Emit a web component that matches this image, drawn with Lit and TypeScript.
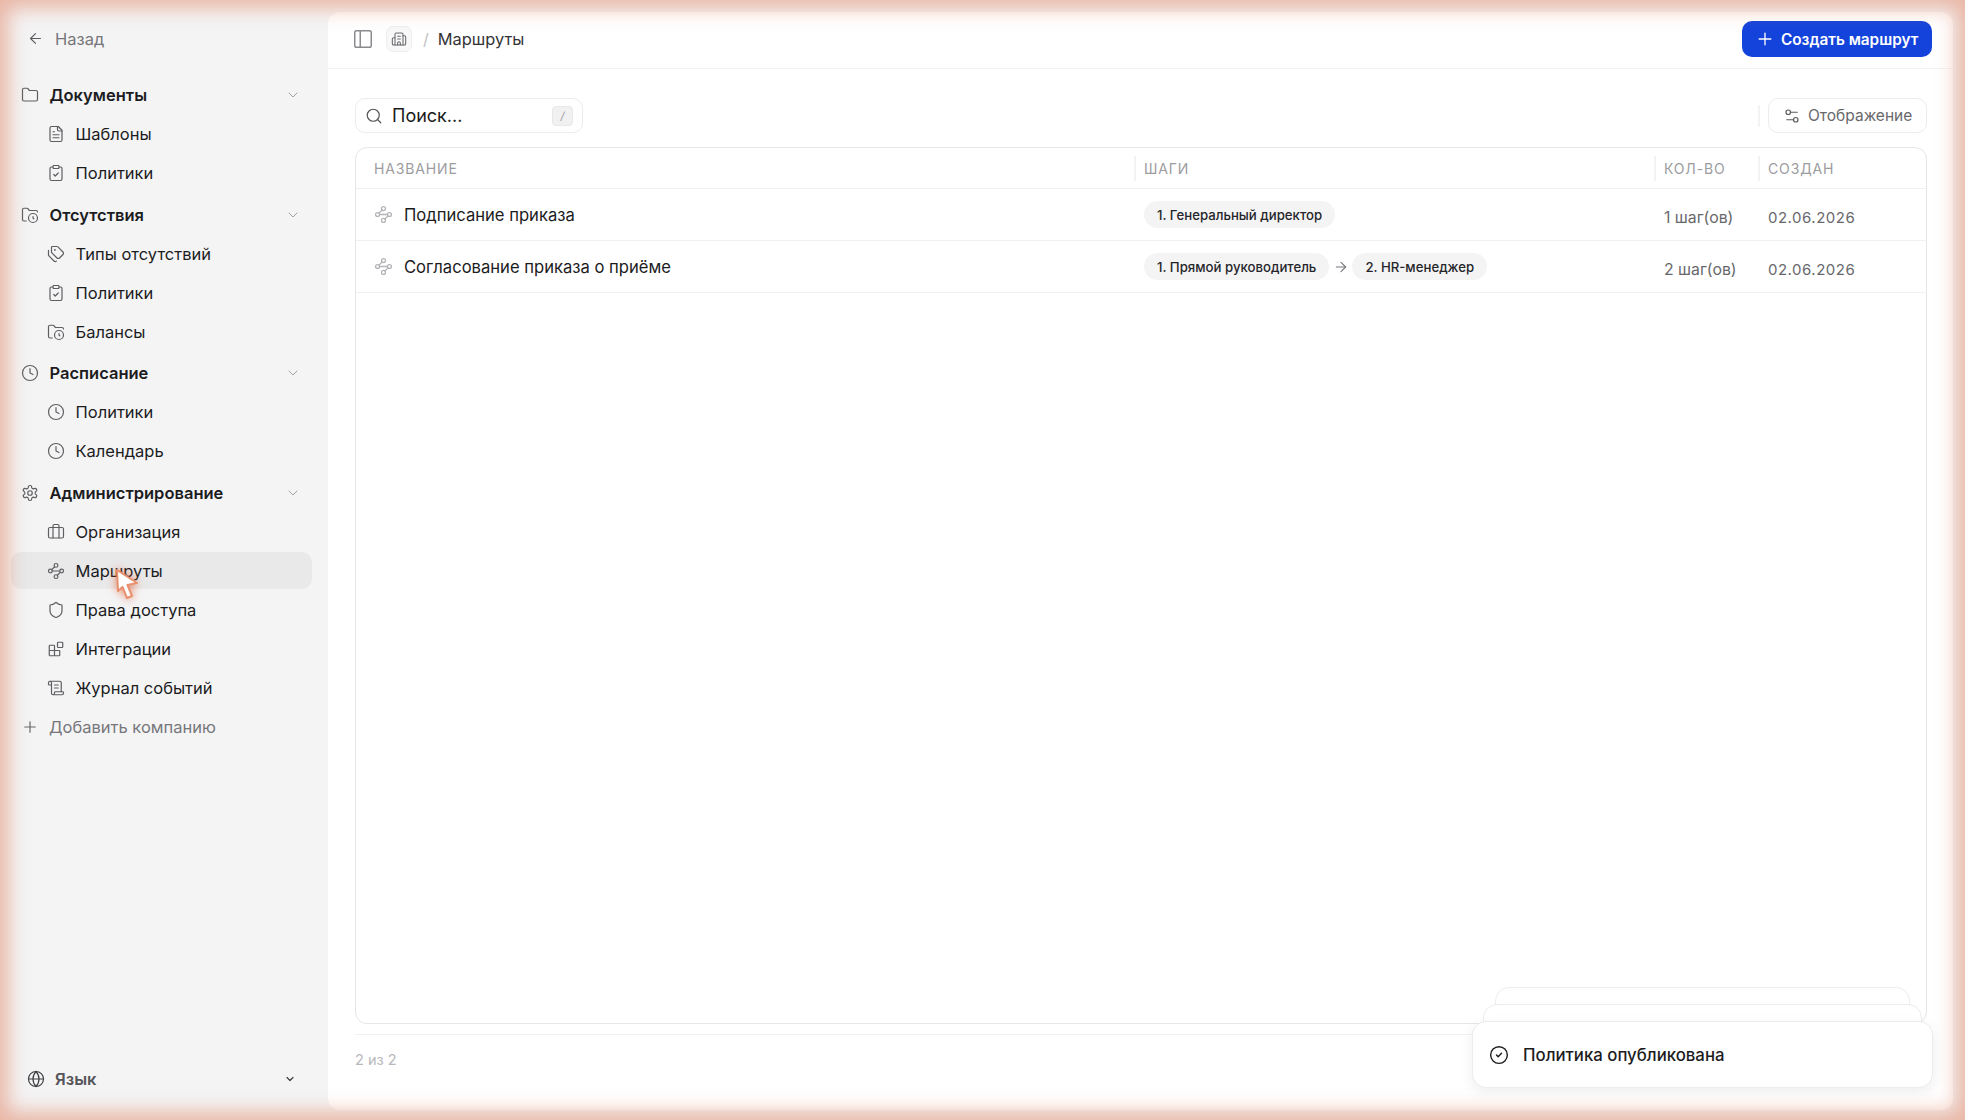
import { LitElement, html, css, svg } from "lit";
import { customElement } from "lit/decorators.js";

const I: Record<string, any> = {
  folder: svg`<path d="M20 20a2 2 0 0 0 2-2V8a2 2 0 0 0-2-2h-7.9a2 2 0 0 1-1.69-.9L9.6 3.9A2 2 0 0 0 7.93 3H4a2 2 0 0 0-2 2v13a2 2 0 0 0 2 2Z"/>`,
  folderClock: svg`<circle cx="16" cy="16" r="6"/><path d="M7 20H4a2 2 0 0 1-2-2V5a2 2 0 0 1 2-2h3.9a2 2 0 0 1 1.69.9l.81 1.2a2 2 0 0 0 1.67.9H20a2 2 0 0 1 2 2"/><path d="M16 14v2l1 1"/>`,
  file: svg`<path d="M15 2H6a2 2 0 0 0-2 2v16a2 2 0 0 0 2 2h12a2 2 0 0 0 2-2V7Z"/><path d="M14 2v4a2 2 0 0 0 2 2h4"/><path d="M10 9H8"/><path d="M16 13H8"/><path d="M16 17H8"/>`,
  clip: svg`<rect x="8" y="2" width="8" height="4" rx="1"/><path d="M16 4h2a2 2 0 0 1 2 2v14a2 2 0 0 1-2 2H6a2 2 0 0 1-2-2V6a2 2 0 0 1 2-2h2"/><path d="m9 14 2 2 4-4"/>`,
  tags: svg`<path d="M13.172 2a2 2 0 0 1 1.414.586l6.71 6.71a2.4 2.4 0 0 1 0 3.408l-4.592 4.592a2.4 2.4 0 0 1-3.408 0l-6.71-6.71A2 2 0 0 1 6 9.172V3a1 1 0 0 1 1-1z"/><path d="M2 7v6.172a2 2 0 0 0 .586 1.414l6.71 6.71a2.4 2.4 0 0 0 3.191.193"/><circle cx="10.5" cy="6.5" r=".5"/>`,
  clock: svg`<circle cx="12" cy="12" r="10"/><polyline points="12 6 12 12 16 14"/>`,
  gear: svg`<path d="M12.22 2h-.44a2 2 0 0 0-2 2v.18a2 2 0 0 1-1 1.73l-.43.25a2 2 0 0 1-2 0l-.15-.08a2 2 0 0 0-2.73.73l-.22.38a2 2 0 0 0 .73 2.73l.15.1a2 2 0 0 1 1 1.72v.51a2 2 0 0 1-1 1.74l-.15.09a2 2 0 0 0-.73 2.73l.22.38a2 2 0 0 0 2.73.73l.15-.08a2 2 0 0 1 2 0l.43.25a2 2 0 0 1 1 1.73V20a2 2 0 0 0 2 2h.44a2 2 0 0 0 2-2v-.18a2 2 0 0 1 1-1.73l.43-.25a2 2 0 0 1 2 0l.15.08a2 2 0 0 0 2.73-.73l.22-.39a2 2 0 0 0-.73-2.73l-.15-.08a2 2 0 0 1-1-1.74v-.5a2 2 0 0 1 1-1.74l.15-.09a2 2 0 0 0 .73-2.73l-.22-.38a2 2 0 0 0-2.73-.73l-.15.08a2 2 0 0 1-2 0l-.43-.25a2 2 0 0 1-1-1.73V4a2 2 0 0 0-2-2z"/><circle cx="12" cy="12" r="3"/>`,
  case: svg`<rect x="2" y="6" width="20" height="14" rx="2"/><path d="M16 20V4a2 2 0 0 0-2-2h-4a2 2 0 0 0-2 2v16"/>`,
  way: svg`<circle cx="12" cy="4.5" r="2.5"/><path d="m10.2 6.3-3.9 3.9"/><circle cx="4.5" cy="12" r="2.5"/><path d="M7 12h10"/><circle cx="19.5" cy="12" r="2.5"/><path d="m13.8 17.7 3.9-3.9"/><circle cx="12" cy="19.5" r="2.5"/>`,
  shield: svg`<path d="M20 13c0 5-3.5 7.5-7.66 8.95a1 1 0 0 1-.67-.01C7.5 20.5 4 18 4 13V6a1 1 0 0 1 1-1c2 0 4.5-1.2 6.24-2.72a1.17 1.17 0 0 1 1.52 0C14.51 3.81 17 5 19 5a1 1 0 0 1 1 1z"/>`,
  blocks: svg`<rect x="14" y="3" width="7" height="7" rx="1"/><path d="M10 21V8a1 1 0 0 0-1-1H4a1 1 0 0 0-1 1v12a1 1 0 0 0 1 1h12a1 1 0 0 0 1-1v-5a1 1 0 0 0-1-1H3"/>`,
  scroll: svg`<path d="M15 12h-5"/><path d="M15 8h-5"/><path d="M19 17V5a2 2 0 0 0-2-2H4"/><path d="M8 21h12a2 2 0 0 0 2-2v-1a1 1 0 0 0-1-1H11a1 1 0 0 0-1 1v1a2 2 0 1 1-4 0V5a2 2 0 1 0-4 0v2a1 1 0 0 0 1 1h3"/>`,
  building: svg`<path d="M10 12h4"/><path d="M10 8h4"/><path d="M14 21v-3a2 2 0 0 0-4 0v3"/><path d="M6 10H4a2 2 0 0 0-2 2v7a2 2 0 0 0 2 2h16a2 2 0 0 0 2-2V9a2 2 0 0 0-2-2h-2"/><path d="M6 21V5a2 2 0 0 1 2-2h8a2 2 0 0 1 2 2v16"/>`,
  sliders: svg`<path d="M14 17H5"/><path d="M19 7h-9"/><circle cx="17" cy="17" r="3"/><circle cx="7" cy="7" r="3"/>`,
  check: svg`<circle cx="12" cy="12" r="10"/><path d="m9 12 2 2 4-4"/>`,
  panel: svg`<rect x="3" y="3" width="18" height="18" rx="2"/><path d="M9 3v18"/>`,
  globe: svg`<circle cx="12" cy="12" r="10"/><path d="M12 2a14.5 14.5 0 0 0 0 20 14.5 14.5 0 0 0 0-20"/><path d="M2 12h20"/>`,
  back: svg`<path d="m12 19-7-7 7-7"/><path d="M19 12H5"/>`,
  arrow: svg`<path d="M5 12h14"/><path d="m12 5 7 7-7 7"/>`,
  search: svg`<path d="m21 21-4.34-4.34"/><circle cx="11" cy="11" r="8"/>`,
  plus: svg`<path d="M5 12h14"/><path d="M12 5v14"/>`,
  chev: svg`<path d="m6 9 6 6 6-6"/>`,
};

const icon = (n: string, cls = "") =>
  html`<svg class="ic ${cls}" viewBox="0 0 24 24" fill="none" stroke="currentColor" stroke-linecap="round" stroke-linejoin="round">${I[n]}</svg>`;

const NAV = [
  { icon: "folder", label: "Документы", items: [["file", "Шаблоны"], ["clip", "Политики"]] },
  { icon: "folderClock", label: "Отсутствия", items: [["tags", "Типы отсутствий"], ["clip", "Политики"], ["folderClock", "Балансы"]] },
  { icon: "clock", label: "Расписание", items: [["clock", "Политики"], ["clock", "Календарь"]] },
  { icon: "gear", label: "Администрирование", items: [["case", "Организация"], ["way", "Маршруты"], ["shield", "Права доступа"], ["blocks", "Интеграции"], ["scroll", "Журнал событий"]] },
];

const ROWS = [
  { name: "Подписание приказа", steps: ["1. Генеральный директор"], count: "1 шаг(ов)", date: "02.06.2026" },
  { name: "Согласование приказа о приёме", steps: ["1. Прямой руководитель", "2. HR-менеджер"], count: "2 шаг(ов)", date: "02.06.2026" },
];

@customElement("app-root")
export class AppRoot extends LitElement {
  static styles = css`
    :host {
      display: block;
      position: relative;
      height: 1120px;
      overflow: hidden;
      font-family: Inter, "Liberation Sans", sans-serif;
      color: #1a1a1a;
      background: #f4f4f5;
    }
    * { box-sizing: border-box; }
    .ic { width: 18px; height: 18px; stroke-width: 1.6; flex: none; display: block; }
    .layout { display: flex; height: 100%; }
    .side { width: 328px; flex: none; display: flex; flex-direction: column; padding: 20px 16px 23px 11px; }
    .row { height: 37px; display: flex; align-items: center; font-size: 16.5px; border-radius: 10px; margin-bottom: 2px; }
    .back { padding-left: 16px; color: #76767a; margin-bottom: 19.5px; gap: 11px; }
    .back .ic { width: 17px; height: 17px; color: #5c5c60; }
    .sec { padding: 0 11px 0 10px; font-weight: 600; color: #1c1c1e; gap: 10.5px; }
    .sec .ic { color: #5e5e62; }
    .sec .ic.chev { width: 16px; height: 16px; margin-left: auto; color: #a0a0a4; stroke-width: 1.5; }
    .group { margin-bottom: 2.67px; }
    .item { padding-left: 36px; gap: 10.5px; color: #1c1c1e; font-weight: 400; }
    .item .ic { color: #5e5e62; }
    .item.on { background: #e9e9ea; }
    .add { margin-top: -3px; padding-left: 10px; gap: 10px; color: #77777b; }
    .add .ic { color: #66666a; }
    .lang { margin-top: auto; padding: 0 16px 0 15.5px; gap: 10.5px; color: #55555a; font-weight: 600; margin-bottom: 0; }
    .lang .ic { color: #3f3f43; width: 18px; height: 18px; }
    .lang .ic.chev { width: 12px; height: 12px; stroke-width: 2.4; margin-left: auto; }

    .main { flex: 1; margin: 12px 12px 10px 0; background: #fff; border-radius: 12px; display: flex; flex-direction: column; min-width: 0; }
    .top { height: 57px; flex: none; display: flex; align-items: center; padding: 0 21px 2px 24px; border-bottom: 1px solid #f3f3f4; }
    .top .panel { color: #8a8a8e; width: 22px; height: 22px; }
    .org { width: 26px; height: 26px; margin-left: 12px; border: 1px solid #eeeeef; background: #f8f8f8; border-radius: 7px; display: flex; align-items: center; justify-content: center; color: #6a6a6e; }
    .org .ic { width: 16px; height: 16px; }
    .slash { margin: 0 9px 0 11px; color: #c0c0c2; font-size: 16px; }
    .crumb { font-size: 16.4px; color: #333336; }
    .cta { margin-left: auto; height: 36px; width: 190px; background: #1443dc; color: #fff; border-radius: 10px; display: flex; align-items: center; gap: 6px; padding-left: 13px; font-size: 15.3px; font-weight: 600; }
    .cta .ic { width: 20px; height: 20px; }

    .body { flex: 1; display: flex; flex-direction: column; padding: 29px 26px 0 27px; min-height: 0; }
    .tools { display: flex; align-items: center; height: 35px; flex: none; }
    .search { width: 228px; height: 35px; border: 1.5px solid #ececee; border-radius: 10px; display: flex; align-items: center; padding: 0 9px 0 9px; gap: 9px; font-size: 18px; color: #1a1a1a; }
    .search .ic { color: #55555a; }
    .kbd { margin-left: auto; width: 21px; height: 20px; background: #f1f1f2; border: 1px solid #e8e8ea; border-radius: 4px; font-size: 11px; font-style: italic; color: #9a9a9e; display: flex; align-items: center; justify-content: center; }
    .sep { margin-left: auto; width: 2px; height: 22px; background: #f3f3f4; }
    .view { margin-left: 8px; width: 159px; height: 35px; border: 1.5px solid #ececee; border-radius: 10px; display: flex; align-items: center; padding-left: 14px; gap: 7px; font-size: 15.5px; color: #68686c; }
    .view .ic { color: #5e5e62; }

    .table { flex: 1; margin-top: 14px; border: 1px solid #e6e6e8; border-radius: 12px; min-height: 0; }
    .grid { display: grid; grid-template-columns: 778px 520px 104px 1fr; align-items: center; }
    .head { height: 41px; border-bottom: 1px solid #f0f0f1; }
    .th { position: relative; font-size: 14px; font-weight: 400; letter-spacing: 0.85px; color: #9c9ca0; padding-left: 18px; }
    .th + .th { padding-left: 10px; }
    .th + .th::before { content: ""; position: absolute; left: 0; top: -4px; bottom: -4px; width: 2px; background: #f3f3f4; }
    .tr { height: 52px; border-bottom: 1px solid #f1f1f2; }
    .name { display: flex; align-items: center; gap: 11px; padding-left: 18px; font-size: 16.6px; color: #1c1c1e; }
    .name .ic { color: #b4b4b8; width: 19px; height: 19px; }
    .steps { display: flex; align-items: center; padding-left: 10px; gap: 3.5px; }
    .steps .ic { width: 16px; height: 16px; color: #77777b; }
    .pill { height: 27px; padding: 0 13px; border-radius: 14px; background: #f4f4f5; font-size: 13.2px; font-weight: 500; display: flex; align-items: center; color: #26262a; }
    .cnt, .date { padding-left: 10px; color: #68686c; padding-top: 5px; }
    .cnt { font-size: 15.8px; }
    .date { font-size: 15px; letter-spacing: 0.5px; }
    .foot { flex: none; height: 76px; margin-top: 10px; border-top: 1px solid #f1f1f2; padding-top: 16px; font-size: 14.5px; color: #b8b8bc; }

    .toasts { position: absolute; left: 1472px; top: 987px; width: 461px; height: 101px; }
    .card { position: absolute; background: #fff; border: 1px solid #ececee; border-radius: 14px; }
    .c3 { left: 23px; right: 23px; top: 0; height: 50px; }
    .c2 { left: 11px; right: 11px; top: 17px; height: 50px; }
    .c1 { left: 0; right: 0; top: 34px; height: 67px; box-shadow: 0 4px 14px rgba(0,0,0,.07); display: flex; align-items: center; padding-left: 16px; gap: 14px; font-size: 16.8px; font-weight: 500; color: #1c1c1e; }
    .c1 .ic { width: 20px; height: 20px; color: #1c1c1e; stroke-width: 1.7; }

    .cursor { position: absolute; left: 111px; top: 565px; width: 34px; height: 38px; filter: drop-shadow(0 0 5px rgba(226,90,40,.7)); }
    .glow { position: absolute; inset: 0; pointer-events: none; box-shadow: inset 0 0 20px 8px rgba(225,140,110,.6); }
  `;

  render() {
    return html`
      <div class="layout">
        <aside class="side">
          <div class="row back">${icon("back")}<span>Назад</span></div>
          ${NAV.map(
            (g) => html`<div class="group">
              <div class="row sec">${icon(g.icon)}<span>${g.label}</span>${icon("chev", "chev")}</div>
              ${g.items.map(
                ([ic, t]) => html`<div class="row item ${t === "Маршруты" ? "on" : ""}">${icon(ic)}<span>${t}</span></div>`
              )}
            </div>`
          )}
          <div class="row add">${icon("plus")}<span>Добавить компанию</span></div>
          <div class="row lang">${icon("globe")}<span>Язык</span>${icon("chev", "chev")}</div>
        </aside>
        <main class="main">
          <header class="top">
            ${icon("panel", "panel")}
            <div class="org">${icon("building")}</div>
            <span class="slash">/</span>
            <span class="crumb">Маршруты</span>
            <div class="cta">${icon("plus")}<span>Создать маршрут</span></div>
          </header>
          <section class="body">
            <div class="tools">
              <div class="search">${icon("search")}<span>Поиск...</span><span class="kbd">/</span></div>
              <div class="sep"></div>
              <div class="view">${icon("sliders")}<span>Отображение</span></div>
            </div>
            <div class="table">
              <div class="grid head">
                <div class="th">НАЗВАНИЕ</div>
                <div class="th">ШАГИ</div>
                <div class="th">КОЛ-ВО</div>
                <div class="th">СОЗДАН</div>
              </div>
              ${ROWS.map(
                (r) => html`<div class="grid tr">
                  <div class="name">${icon("way")}<span>${r.name}</span></div>
                  <div class="steps">
                    ${r.steps.map(
                      (s, i) => html`${i > 0 ? icon("arrow") : ""}<span class="pill">${s}</span>`
                    )}
                  </div>
                  <div class="cnt">${r.count}</div>
                  <div class="date">${r.date}</div>
                </div>`
              )}
            </div>
            <div class="foot">2 из 2</div>
          </section>
        </main>
      </div>
      <div class="toasts">
        <div class="card c3"></div>
        <div class="card c2"></div>
        <div class="card c1">${icon("check")}<span>Политика опубликована</span></div>
      </div>
      <svg class="cursor" viewBox="0 0 34 38">
        <path d="M6 5 L7 26 L11.5 22 L16 33 L21 31 L16.5 20 L26 18 Z" fill="#fff" stroke="#e8906f" stroke-width="2" stroke-linejoin="round"/>
      </svg>
      <div class="glow"></div>
    `;
  }
}
